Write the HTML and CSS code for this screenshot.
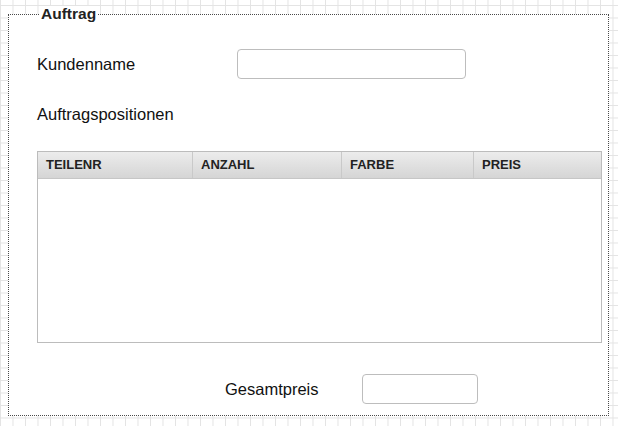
FILE: index.html
```html
<!DOCTYPE html>
<html lang="de">
<head>
    <meta charset="UTF-8">
    <meta name="viewport" content="width=device-width, initial-scale=1.0">
    <title>Auftrag</title>
    <link rel="stylesheet" href="styles.css">
</head>
<body>
    <div class="panel">
        <div class="panel-title">Auftrag</div>

        <div class="form-row first-row">
            <label class="field-label" for="kunde">Kundenname</label>
            <input class="text-input name-input" id="kunde" type="text">
        </div>

        <div class="section-label">Auftragspositionen</div>

        <div class="grid-table">
            <div class="grid-head">
                <div class="col col-teil">TEILENR</div>
                <div class="col col-anzahl">ANZAHL</div>
                <div class="col col-farbe">FARBE</div>
                <div class="col col-preis">PREIS</div>
            </div>
            <div class="grid-body"></div>
        </div>

        <div class="form-row total-row">
            <label class="field-label total-label" for="gesamt">Gesamtpreis</label>
            <input class="text-input total-input" id="gesamt" type="text">
        </div>
    </div>
</body>
</html>
```

FILE: styles.css
```css
body {
    margin: 0;
    padding: 14px 0 0 8px;
    font-family: "Liberation Sans", Arial, sans-serif;
    color: #111;
    background-color: #fff;
    background-image:
        linear-gradient(to right, #e3e3e3 1px, transparent 1px),
        linear-gradient(to bottom, #e3e3e3 1px, transparent 1px);
    background-size: 12.5px 12.5px;
    background-position: 0 5px;
}

.panel {
    box-sizing: border-box;
    width: 601px;
    height: 402px;
    background-color: #fff;
    border: 1px dotted #4a4a4a;
}

.panel-title {
    width: fit-content;
    margin: -9px 0 0 30px;
    padding: 0 2px;
    background-color: #fff;
    font-size: 15.5px;
    font-weight: bold;
    line-height: 16px;
    color: #222;
}

.form-row {
    display: flex;
    align-items: center;
}

.first-row {
    margin-top: 27px;
    padding-left: 28px;
}

.field-label {
    width: 200px;
    font-size: 16.5px;
}

.text-input {
    box-sizing: border-box;
    height: 30px;
    margin: 0;
    border: 1px solid #bdbdbd;
    border-radius: 4px;
    background: #fff;
    outline: none;
}

.name-input {
    width: 229px;
}

.section-label {
    margin-top: 25px;
    padding-left: 28px;
    font-size: 16.5px;
    line-height: 20px;
}

.grid-table {
    box-sizing: border-box;
    width: 565px;
    height: 192px;
    margin: 27px 0 0 28px;
    border: 1px solid #bcbcbc;
}

.grid-head {
    display: flex;
    height: 26px;
    background: linear-gradient(to bottom, #ececec, #d5d5d5);
    border-bottom: 1px solid #c6c6c6;
}

.col {
    box-sizing: border-box;
    padding-left: 8px;
    font-size: 13px;
    font-weight: bold;
    line-height: 26px;
    color: #222;
    border-right: 1px solid #c9c9c9;
}

.col-teil { width: 155px; }
.col-anzahl { width: 149px; }
.col-farbe { width: 132px; }
.col-preis { flex: 1; border-right: none; }

.total-row {
    margin-top: 31px;
    padding-left: 216px;
}

.total-label {
    width: 137px;
}

.total-input {
    width: 116px;
}
```
